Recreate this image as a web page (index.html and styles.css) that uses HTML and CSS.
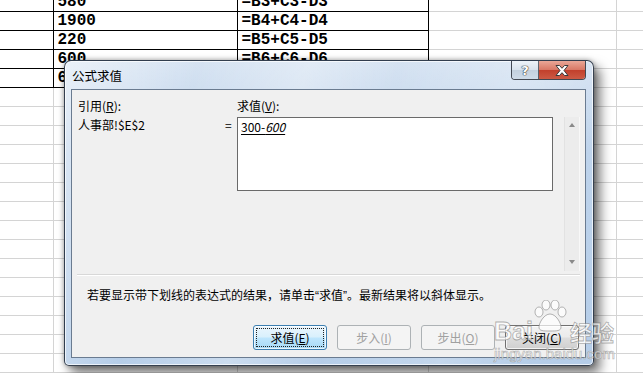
FILE: index.html
```html
<!DOCTYPE html>
<html lang="zh-CN">
<head>
<meta charset="UTF-8">
<title>公式求值</title>
<link rel="stylesheet" href="styles.css">
</head>
<body>
<table class="sheet">
<colgroup><col class="c0"><col class="c1"><col class="c2"><col class="c3"><col class="c4"></colgroup>
<tr class="b"><td></td><td>580</td><td>=B3+C3-D3</td><td></td><td></td></tr>
<tr class="b"><td></td><td>1900</td><td>=B4+C4-D4</td><td></td><td></td></tr>
<tr class="b"><td></td><td>220</td><td>=B5+C5-D5</td><td></td><td></td></tr>
<tr class="b"><td></td><td>600</td><td>=B6+C6-D6</td><td></td><td></td></tr>
<tr class="b"><td></td><td>600</td><td>=B7+C7-D7</td><td></td><td></td></tr>
<tr><td></td><td></td><td></td><td></td><td></td></tr>
<tr><td></td><td></td><td></td><td></td><td></td></tr>
<tr><td></td><td></td><td></td><td></td><td></td></tr>
<tr><td></td><td></td><td></td><td></td><td></td></tr>
<tr><td></td><td></td><td></td><td></td><td></td></tr>
<tr><td></td><td></td><td></td><td></td><td></td></tr>
<tr><td></td><td></td><td></td><td></td><td></td></tr>
<tr><td></td><td></td><td></td><td></td><td></td></tr>
<tr><td></td><td></td><td></td><td></td><td></td></tr>
<tr><td></td><td></td><td></td><td></td><td></td></tr>
<tr><td></td><td></td><td></td><td></td><td></td></tr>
<tr><td></td><td></td><td></td><td></td><td></td></tr>
<tr><td></td><td></td><td></td><td></td><td></td></tr>
<tr><td></td><td></td><td></td><td></td><td></td></tr>
<tr><td></td><td></td><td></td><td></td><td></td></tr>
</table>

<div class="dlg">
  <div class="dlg-title">
    <span class="cap">公式求值</span>
    <div class="cap-btns">
      <span class="cb help">?</span>
      <span class="cb close"><svg width="14" height="11" viewBox="0 0 14 11"><polygon points="1,0.5 4.5,0.5 7,3.3 9.5,0.5 13,0.5 9,5.5 13,10.5 9.5,10.5 7,7.7 4.5,10.5 1,10.5 5,5.5" fill="#fff" stroke="#3a3a3a" stroke-width="1"/></svg></span>
    </div>
  </div>
  <div class="panel">
    <div class="head"><span>引用(<u>R</u>):</span><span>求值(<u>V</u>):</span></div>
    <div class="body">
      <span class="ref">人事部!$E$2</span>
      <span class="eq">=</span>
      <div class="box"><u>300-<i>600</i></u></div>
      <div class="vscroll"><span class="arr up"></span><span class="arr down"></span></div>
    </div>
    <div class="sep"></div>
    <p class="msg">若要显示带下划线的表达式的结果，请单击<span class="q">“</span>求值<span class="q">”</span>。最新结果将以斜体显示。</p>
    <div class="btns">
      <button class="btn def"><span class="focus">求值(<u>E</u>)</span></button>
      <button class="btn" disabled>步入(<u>I</u>)</button>
      <button class="btn" disabled>步出(<u>O</u>)</button>
      <button class="btn">关闭(<u>C</u>)</button>
    </div>
  </div>
</div>

<div class="mark">
  <svg class="paw" width="36" height="32" viewBox="0 0 36 32">
    <ellipse cx="7" cy="12" rx="4" ry="5"/>
    <ellipse cx="14" cy="5" rx="4" ry="5"/>
    <ellipse cx="23" cy="5" rx="4" ry="5"/>
    <ellipse cx="30" cy="12" rx="4" ry="5"/>
    <path d="M18 14c-6 0-11 9-11 13s4 4 11 4 11 0 11-4-5-13-11-13z"/>
  </svg>
  <div class="mark-row"><span class="bai">Bai</span><span class="jy">经验</span></div>
  <div class="url">jingyan.baidu.com</div>
</div>
</body>
</html>
```

FILE: styles.css
```css
body {margin:0; background:#fff; overflow:hidden;}

/* worksheet behind the dialog */
.sheet {border-collapse:collapse; table-layout:fixed; width:643px; margin-top:-8px; font-family:"Liberation Mono", monospace;}
.sheet tr {height:19px;}
.sheet td {padding:0 0 0 4px; border:1px solid #d4d4d4; font-size:16px; line-height:18px; font-weight:bold; white-space:nowrap; overflow:hidden; color:#000;}
.sheet tr.b td {border-color:#000;}
.sheet tr.b td:nth-child(4), .sheet tr.b td:nth-child(5) {border-color:#d4d4d4;}
.sheet tr.b td:nth-child(3) {border-right-color:#000;}
.sheet td:first-child {border-left:0;}
col.c0 {width:53px;}
col.c1 {width:184px;}
col.c2 {width:191px;}
col.c3 {width:188px;}
col.c4 {width:27px;}

/* dialog window */
.dlg {position:absolute; left:64px; top:60px; width:530px; height:306px; box-sizing:border-box; display:flex; flex-direction:column;
  border:1px solid rgba(25,35,50,.85); border-radius:7px 7px 5px 5px; padding:0 7px 8px 6px;
  background:linear-gradient(105deg, rgba(255,255,255,.5) 0, rgba(255,255,255,0) 22%, rgba(255,255,255,.3) 40%, rgba(255,255,255,0) 55%, rgba(255,255,255,.2) 75%, rgba(255,255,255,0) 90%), linear-gradient(#d6e3f2, #bed3eb 30%, #b5cde8);
  box-shadow:inset 0 0 0 1px rgba(255,255,255,.7), 6px 7px 12px rgba(0,0,0,.55), 0 0 5px rgba(0,0,0,.35);
  font-family:"Noto Sans CJK SC", "Noto Sans", sans-serif; font-size:12px; color:#000;}
.dlg-title {display:flex; align-items:center; height:28px; flex:none;}
.cap {padding-left:1px; font-size:12.5px;}
.cap-btns {display:flex; align-self:flex-start; margin-left:auto; border:1px solid rgba(40,45,55,.85); border-top:0; border-radius:0 0 4px 4px; overflow:hidden;}
.cb {display:flex; align-items:center; justify-content:center; height:18px;}
.help {width:26px; border-right:1px solid rgba(40,45,55,.7); background:linear-gradient(#eef3f8, #d9e3ed 48%, #c3d0de 52%, #cfdbe8); color:#fff; font:bold 13px "DejaVu Sans", sans-serif; text-shadow:0 0 1px #333, 0 0 1px #333, 0 0 1px #333;}
.close {width:46px; background:linear-gradient(#e9a797, #d87866 48%, #c2402c 52%, #cc5a44);}

.panel {flex:1; background:#f0f0f0; border:1px solid #6a7b90; padding:8px 5px 7px 6px;}
.head {display:grid; grid-template-columns:159px auto; line-height:16px;}
.body {display:grid; grid-template-columns:147px 12px 316px 11px 16px; height:154px; margin-top:3px; line-height:16px;}
.box {box-sizing:border-box; height:74px; border:1px solid #6a6a6a; background:#fff; padding:1px 3px 0;}
.box u {text-underline-offset:2px;}
.vscroll {grid-column:5; position:relative; background:#ececec; border-left:1px solid #e2e2e2; border-right:1px solid #f8f8f8;}
.arr {position:absolute; left:4px; width:0; height:0; border-left:3.5px solid transparent; border-right:3.5px solid transparent;}
.arr.up {top:6px; border-bottom:4px solid #8a8a8a;}
.arr.down {bottom:7px; border-top:4px solid #8a8a8a;}
.sep {height:1px; margin:3px 0 0 -1px; background:#d8d8d8; border-bottom:1px solid #fff;}
.msg {margin:11px 0 0 9px; line-height:16px;}
.msg .q {font-family:"Liberation Sans", sans-serif;}
.btns {display:flex; justify-content:flex-end; gap:10px; margin-top:21px; padding-right:1px;}
.btn {width:74px; height:25px; padding:0; border:1px solid #707070; border-radius:3px; display:flex; align-items:center; justify-content:center;
  background:linear-gradient(#f2f2f2, #ebebeb 48%, #dddddd 52%, #cfcfcf); box-shadow:inset 0 0 0 1px rgba(255,255,255,.75);
  font-family:"Noto Sans CJK SC", "Noto Sans", sans-serif; font-size:12px; color:#000;}
.btn.def {border-color:#3c7fb1; background:linear-gradient(#eaf6fd, #d9f0fc 48%, #bee6fd 52%, #a7d9f5); padding:2px;}
.btn.def .focus {flex:1; align-self:stretch; display:flex; align-items:center; justify-content:center; border:1px dotted #222;}
.btn:disabled {border-color:#adb2b5; background:#f4f4f4; color:#a0a0a0; box-shadow:none;}

/* baidu watermark */
.mark {position:absolute; left:494px; top:300px; width:120px; color:rgba(255,255,255,.75); font-family:"Liberation Sans", "Noto Sans CJK SC", sans-serif;}
.paw {display:block; margin-left:38px; fill:rgba(255,255,255,.7); stroke:rgba(120,120,120,.55); stroke-width:1;}
.mark-row {display:flex; justify-content:space-between; margin-top:-12px; line-height:22px; -webkit-text-stroke:0.8px rgba(120,120,120,.6);}
.bai {font-size:25px; font-weight:bold;}
.jy {font-size:22px; font-weight:bold; font-family:"Noto Sans CJK SC", sans-serif;}
.url {font-size:15px; margin-top:3px; -webkit-text-stroke:0.6px rgba(120,120,120,.6);}
```
